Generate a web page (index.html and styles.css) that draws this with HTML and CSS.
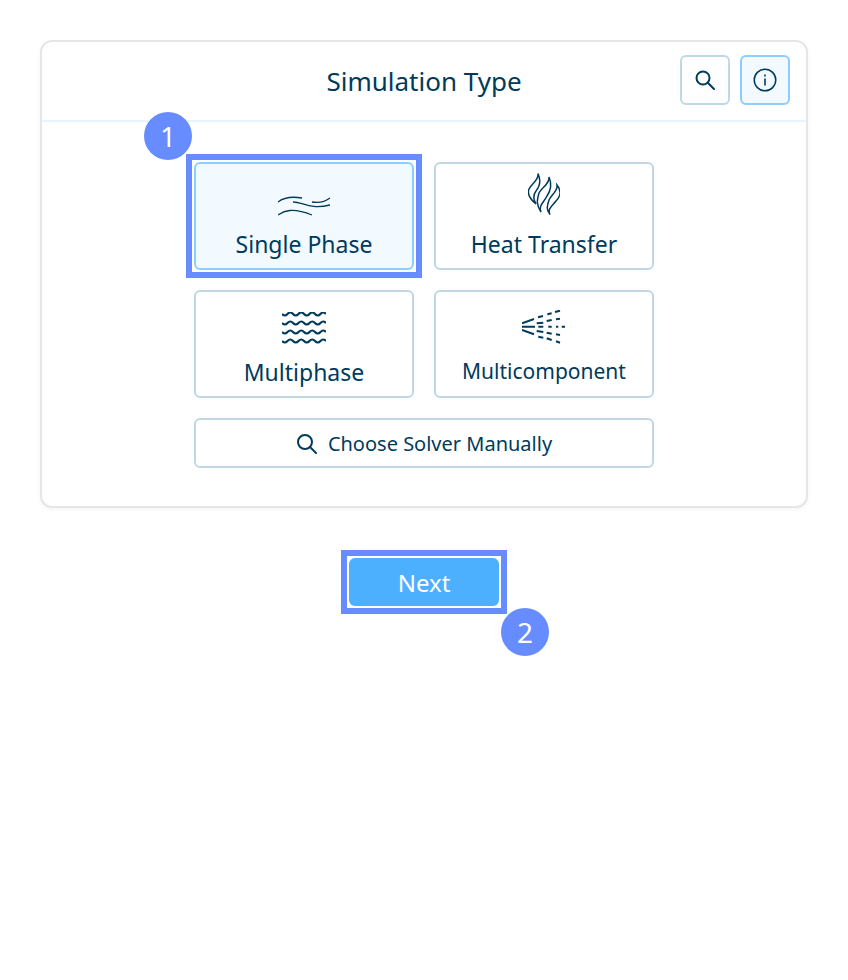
FILE: index.html
```html
<!DOCTYPE html>
<html lang="en">
<head>
<meta charset="utf-8">
<title>Simulation Type</title>
<link rel="stylesheet" href="styles.css">
</head>
<body>
<main class="page">
  <section class="card">
    <header class="card-header">
      <h1 class="title">Simulation Type</h1>
      <div class="header-actions">
        <button class="icon-btn">
          <svg class="icon-search" viewBox="0 0 20 20" fill="none" stroke="#003b5c" stroke-width="2"><circle cx="8" cy="8" r="6.5"/><path d="M12.8 12.8 19 19" stroke-linecap="round"/></svg>
        </button>
        <button class="icon-btn is-active">
          <svg class="icon-info" viewBox="0 0 24 24" fill="none" stroke="#003b5c" stroke-width="1.5"><circle cx="12" cy="12" r="10.75"/><path d="M12 10.5v7" stroke-width="1.6"/><path d="M12 6.600v1.800" stroke-width="1.6"/></svg>
        </button>
      </div>
    </header>
    <div class="options">
      <button class="option is-selected">
        <svg class="opt-icon" width="52" height="24" viewBox="0 0 52 24" fill="none" stroke="#003b5c" stroke-width="1.3"><path d="M0 9C5 5 12 3 24 5"/><path d="M15 9C25 9 32 17 52 12"/><path d="M34 9C40 10 47 9 52 5"/><path d="M0 22C6 18 14 14 34 22"/></svg>
        <span class="opt-label">Single Phase</span>
      </button>
      <button class="option">
        <svg class="opt-icon opt-icon-heat" width="32" height="42" viewBox="0 0 32 42" fill="none" stroke="#003b5c" stroke-width="1.500"><path d="M10 .5C11 7 4 10 1 16-1 21 2 26 8 31 5 26 5 22 8 18 12 13 13 7 10 .5Z"/><path d="M21 4C22 11 14 14 11 20 9 27 8 32 13 39 10 33 16 29 19 23 23 17 24 11 21 4Z"/><path d="M29 12C30 18 24 21 21 27 19 33 18 37 22 41.500 19 36 25 32 28 28 33 23 33 17 29 12Z"/></svg>
        <span class="opt-label">Heat Transfer</span>
      </button>
      <button class="option">
        <svg class="opt-icon opt-icon-raised" width="44" height="32" viewBox="0 0 44 32" fill="none" stroke="#003b5c" stroke-width="2.200"><path d="M0 2q2.750 3 5.500 0t5.500 0 5.500 0 5.500 0 5.500 0 5.500 0 5.500 0 5.500 0"/><path d="M0 11q2.750 3 5.500 0t5.500 0 5.500 0 5.500 0 5.500 0 5.500 0 5.500 0 5.500 0"/><path d="M0 20q2.750 3 5.500 0t5.500 0 5.500 0 5.500 0 5.500 0 5.500 0 5.500 0 5.500 0"/><path d="M0 29q2.750 3 5.500 0t5.500 0 5.500 0 5.500 0 5.500 0 5.500 0 5.500 0 5.500 0"/></svg>
        <span class="opt-label">Multiphase</span>
      </button>
      <button class="option">
        <svg class="opt-icon opt-icon-raised" width="44" height="34" viewBox="0 0 44 34" fill="none" stroke="#003b5c" stroke-width="2"><path d="M0 13.300 12 9M16 7.300 21 6M25.300 4.300 29.700 3.300M33 2 38 .7"/><path d="M14.700 13.300 21.300 12.700M24.700 11 29.700 10M34 9.300 38 8.700"/><path d="M0 16.700H13M16.300 16.700H21.300M26.300 16.700H29.700M34 16.700H36.300M39.700 16.700H43"/><path d="M0 20 12 24.300M14.700 21 21.300 22M24.700 22.700 29.700 23.700M34 24.300 38 25"/><path d="M16.300 26.700 21.300 27.700M24.700 28.300 29.700 30M34 31.300 38 32.700"/></svg>
        <span class="opt-label opt-label-small">Multicomponent</span>
      </button>
      <button class="option option-wide">
        <svg class="icon-manual" viewBox="0 0 20 20" fill="none" stroke="#003b5c" stroke-width="2"><circle cx="8" cy="8" r="7"/><path d="M13 13 19 19" stroke-linecap="round"/></svg>
        <span class="wide-label">Choose Solver Manually</span>
      </button>
      <span class="badge badge-one">1</span>
    </div>
  </section>
  <div class="next-row">
    <div class="next-anchor">
      <button class="next-btn">Next</button>
      <span class="badge badge-two">2</span>
    </div>
  </div>
</main>
</body>
</html>
```
FILE: styles.css
```css
* { box-sizing: border-box; }
html, body { margin: 0; background: #fff; }
body {
  font-family: "Noto Sans", "Open Sans", sans-serif;
  color: #003b5c;
  min-height: 980px;
}
.page { padding: 40px; }
button { font-family: inherit; color: inherit; cursor: pointer; padding: 0; }
.card {
  width: 768px;
  height: 468px;
  border: 2px solid #e6e6e6;
  border-radius: 12px;
  background: #fff;
  box-shadow: 0 2px 4px rgba(0, 0, 0, .04);
}
.card-header {
  position: relative;
  height: 80px;
  border-bottom: 2px solid #e6f4ff;
  display: flex;
  align-items: center;
  justify-content: center;
}
.title {
  margin: 0;
  font-size: 26px;
  font-weight: 400;
  line-height: 34px;
}
.header-actions {
  position: absolute;
  right: 16px;
  top: 13px;
  display: flex;
  gap: 10px;
}
.icon-btn {
  width: 50px;
  height: 50px;
  border: 2px solid #bfd7e6;
  border-radius: 6px;
  background: #fff;
  display: flex;
  align-items: center;
  justify-content: center;
}
.icon-btn.is-active { border-color: #8ccfff; background: #f2f9ff; }
.icon-search { width: 20px; height: 20px; }
.icon-info { width: 24px; height: 24px; }
.options {
  position: relative;
  display: grid;
  grid-template-columns: 220px 220px;
  grid-auto-rows: 108px;
  gap: 20px;
  justify-content: center;
  padding-top: 40px;
}
.option {
  position: relative;
  border: 2px solid #bfd7e6;
  border-radius: 6px;
  background: #fff;
  display: flex;
  flex-direction: column;
  align-items: center;
  justify-content: flex-end;
  padding-bottom: 9px;
}
.option.is-selected {
  border-color: #8ccfff;
  background: #f2f9ff;
}
.option.is-selected::after {
  content: "";
  position: absolute;
  inset: -10px;
  border: 6px solid #668cff;
  pointer-events: none;
}
.opt-icon { display: block; flex: none; }
.opt-icon-heat { margin-bottom: 2px; }
.opt-icon-raised { margin-bottom: 1px; }
.opt-label { font-size: 23px; line-height: 30px; margin-top: 12px; }
.opt-label-small { font-size: 21px; margin-top: 11px; margin-bottom: 1px; }
.option-wide {
  grid-column: 1 / 3;
  height: 50px;
  flex-direction: row;
  justify-content: center;
  padding: 1px 0 0 1px;
  gap: 11px;
}
.icon-manual { width: 20px; height: 20px; }
.wide-label { font-size: 20px; line-height: 26px; }
.badge {
  position: absolute;
  width: 48px;
  height: 48px;
  border-radius: 50%;
  background: #668cff;
  color: #fff;
  font-size: 28px;
  line-height: 48px;
  text-align: center;
}
.badge-one { left: 102px; top: -10px; }
.next-row { display: flex; justify-content: center; margin-top: 50px; }
.next-anchor { position: relative; width: 150px; }
.next-anchor::after {
  content: "";
  position: absolute;
  inset: -8px;
  border: 6px solid #668cff;
  pointer-events: none;
}
.next-btn {
  display: block;
  width: 150px;
  height: 48px;
  border: 0;
  border-radius: 6px;
  background: #4db0ff;
  color: #fff;
  font-size: 24px;
}
.badge-two { left: 152px; top: 50px; }
```
